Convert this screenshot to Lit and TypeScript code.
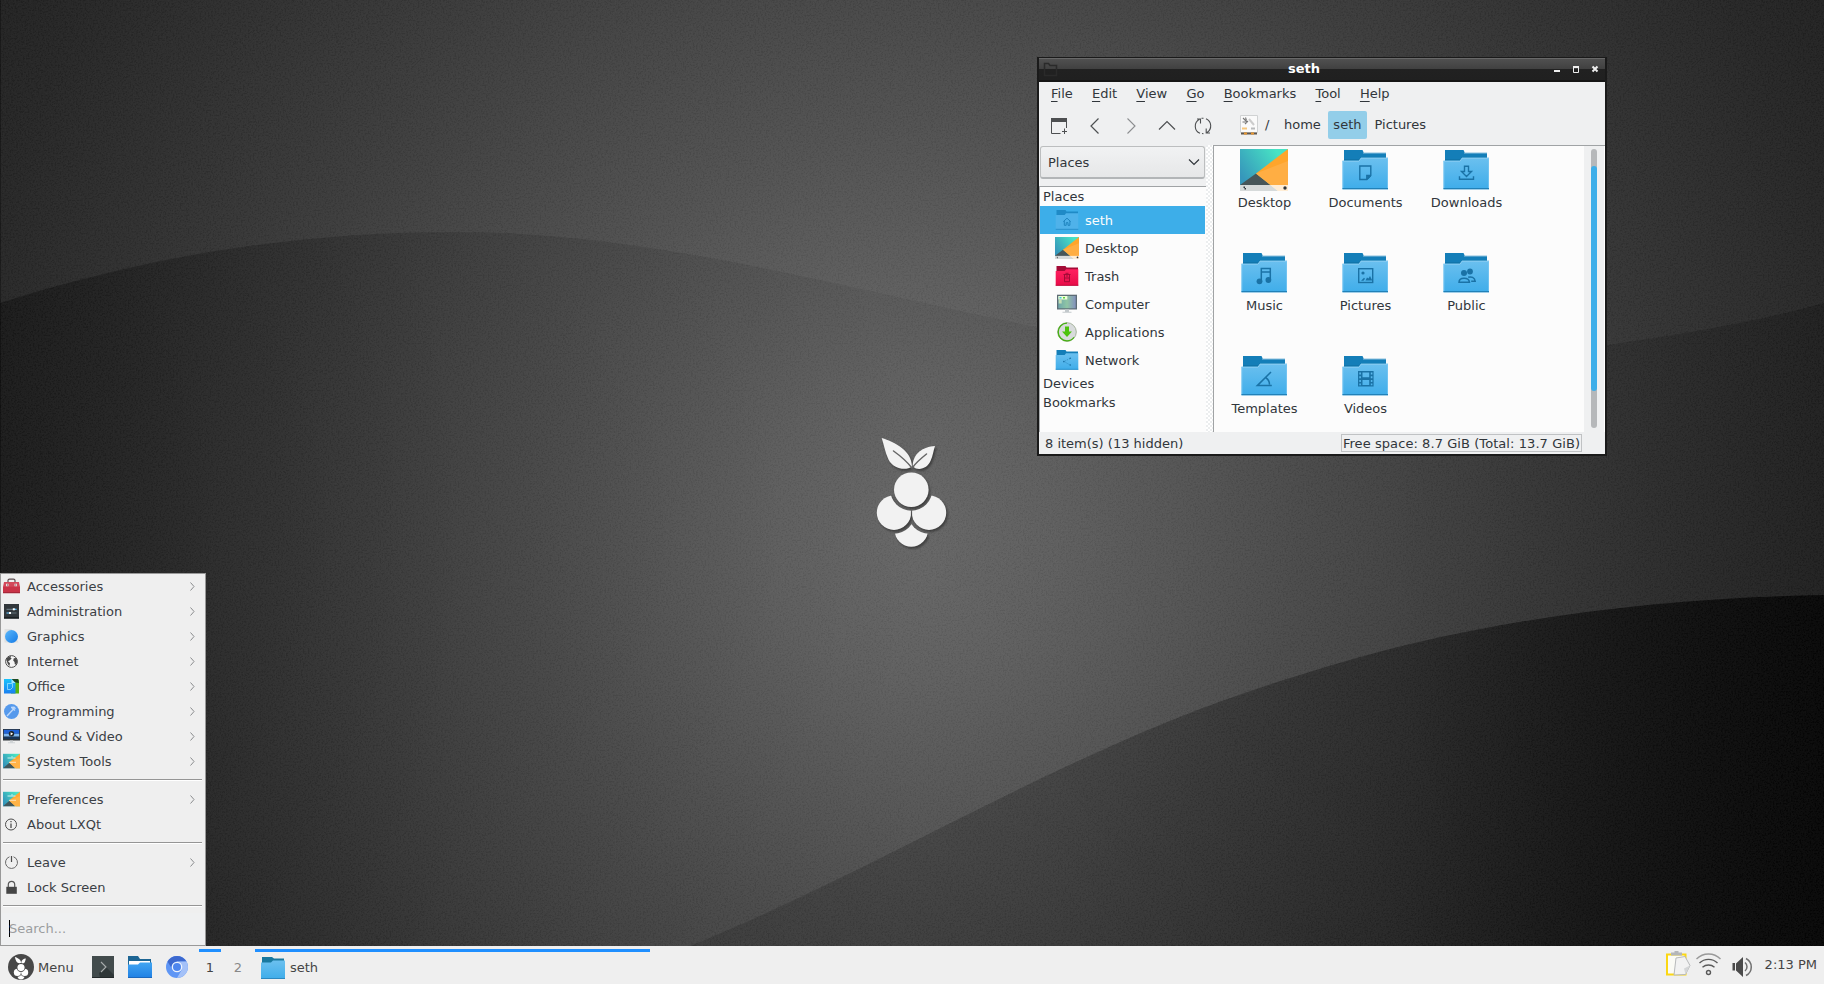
import { LitElement, html, svg, css, nothing } from "lit";
import { customElement } from "lit/decorators.js";
import { classMap } from "lit/directives/class-map.js";

const INK = "#1a72a6";

/* Emblems drawn on the front of the 48px folders */
const emblems: Record<string, unknown> = {
  none: nothing,
  documents: svg`<path d="M18.800 19h11v9.500l-4 4h-7z M29.800 28.500h-4v4" fill="none" stroke=${INK} stroke-width="1.400"/><path d="M30 28.500v.8l-3.800 3.700v-4.500z" fill=${INK}/>`,
  downloads: svg`<path d="M22.500 19.200h4v5.300h3l-5 5-5-5h3z M17.500 29.300v3h14v-3" fill="none" stroke=${INK} stroke-width="1.400"/>`,
  music: svg`<path d="M21.300 31.500v-13h9v11.500 M21.300 22h9" fill="none" stroke=${INK} stroke-width="1.500"/><circle cx="19.500" cy="31.300" r="2.900" fill=${INK}/><circle cx="28.400" cy="30" r="2.900" fill=${INK}/>`,
  pictures: svg`<rect x="17.700" y="18.700" width="14" height="13.800" fill="none" stroke=${INK} stroke-width="1.400"/><circle cx="22" cy="23" r="1.600" fill=${INK}/><path d="M24.500 30.500l1.500-3 1.500 1 1.500-2.500 2.300 4.500z M20 30.800l3-3 1 1-1.500 2z" fill=${INK}/>`,
  public: svg`<circle cx="22" cy="23" r="3" fill=${INK}/><circle cx="28" cy="21.500" r="2.900" fill=${INK}/><path d="M17 32.300c0-5.500 10-5.500 10.500 0z M26.200 27.300c3-1 6.500 0 7 4h-4" fill="none" stroke=${INK} stroke-width="1.500"/>`,
  templates: svg`<path d="M31 19L17.300 32.600h14.500 M26 25c2.500 1.500 3.500 4 3.500 6.500" fill="none" stroke=${INK} stroke-width="1.500"/>`,
  videos: svg`<path d="M17 18h15.600v15.500h-15.600z M18.300 19.500v2h1.600v-2z m0 3.800v2h1.600v-2z m0 3.800v2h1.600v-2z m0 3.500v1.600h1.600v-1.600z M29.800 19.500v2h1.600v-2z m0 3.800v2h1.600v-2z m0 3.800v2h1.600v-2z m0 3.500v1.600h1.600v-1.600z M21.500 19.500v4.700h6.700v-4.700z M21.500 27v5h6.700v-5z" fill=${INK} fill-rule="evenodd"/>`,
};

const folderBig = (emblem: string) => svg`
  <svg class="block" width="48" height="48" viewBox="0 0 48 48">
    <path d="M3 3h18.500l1.500 3h22v10H3z" fill="#147eb8"/>
    <path d="M3 12.500h15l2-2h25v3H3z" fill="#0c5f8d" opacity=".55"/>
    <path d="M22 6h23" stroke="#8bc0de" stroke-width="1"/>
    <path d="M1.500 13.700H18l2-3h27v31.500H1.500z" fill="url(#gFolder)"/>
    <path d="M1.500 14.200H18l2-3h27" fill="none" stroke="#8bcdf2" stroke-width="1"/>
    <path d="M2 14v28M46.500 11v31" stroke="#7cc8f3" stroke-width="1" opacity=".7"/>
    <path d="M1.500 41.600h45.500" stroke="#2181b8" stroke-width="1.200"/>
    ${emblems[emblem]}
  </svg>`;

const folderSmall = (kind: string) => {
  const red = kind === "trash";
  const back = red ? "#a30b36" : kind === "home" ? "#1f8ac6" : "#147eb8";
  const front = red ? "url(#gRed)" : kind === "home" ? "#4fb2ea" : "url(#gFolder)";
  return svg`
  <svg class="block" width="24" height="24" viewBox="0 0 24 24">
    <path d="M1.500 2h9l1 1.500h11.500v5H1.500z" fill=${back}/>
    <path d="M.7 7h9l1.300-1.700h12.300v16.200H.7z" fill=${front}/>
    <path d="M.7 21.300h22.600" stroke=${red ? "#c00a3c" : "#2990cc"} stroke-width="1"/>
    ${kind === "home" ? svg`<path d="M8.300 13.600l3.700-3.400 3.700 3.400M9.300 13v4.300h1.900v-2.600h1.800v2.600h1.900V13" fill="none" stroke="#1f84bf" stroke-width="1"/>` : nothing}
    ${red ? svg`<path d="M8.500 10.500h7M9.500 10.500v7.200h5v-7.200M10.500 9.300h3M9.500 14h5M11 12h2" fill="none" stroke="#a30b36" stroke-width="1"/>` : nothing}
    ${kind === "network" ? svg`<path d="M15 10.500l-6 3 6 3.500" fill="none" stroke=${INK} stroke-width=".6" stroke-dasharray="1.200 1.200"/><circle cx="15.300" cy="10.300" r=".8" fill=${INK}/><circle cx="15.300" cy="17" r=".8" fill=${INK}/><circle cx="8.800" cy="13.600" r=".8" fill=${INK}/>` : nothing}
  </svg>`;
};

const desktopIcon = (w: number, h: number) => svg`
  <svg class="block" width=${w} height=${h} viewBox="0 0 48 42" preserveAspectRatio="none">
    <rect width="48" height="42" fill="url(#gTeal)"/>
    <path d="M0 36l16-11.500L38 42H0z" fill="#475659"/>
    <path d="M16 24.500L48 0v42H38z" fill="#ffa52b"/>
    <path d="M16 24.500L48 12v30H38z" fill="#ffb04a" opacity=".8"/>
    <path d="M0 36h48v6H0z" fill="#fff" opacity=".78"/>
    <path d="M3.500 37.500h1.500v1.500h1v1.500h-1.500v-1.500h-1z" fill="#31363b"/><circle cx="45" cy="39" r="1.700" fill="#31363b"/>
  </svg>`;

const sidebarIcon = (kind: string) => {
  if (kind === "desktop") return desktopIcon(24, 22);
  if (kind === "computer")
    return svg`<svg class="block" width="24" height="24" viewBox="0 0 24 24">
      <rect x="2" y="2.700" width="20" height="14.800" fill="#5d6c75"/><rect x="3.300" y="4" width="17.400" height="12.300" fill="url(#gScreen)"/>
      <path d="M3.300 4h9v3.500h-9z" fill="#efffd9"/><path d="M4.500 5h2v1.500h-2z" fill="#3cc6de"/><path d="M8 5h2v1.500H8z" fill="#5bd13f"/><path d="M3.700 7.500h3v4h-3z" fill="#c6dfb4"/>
      <path d="M10 17.500h4v2.300h2.500v1h-9v-1H10z" fill="#c3c9cc"/></svg>`;
  if (kind === "apps")
    return svg`<svg class="block" width="24" height="24" viewBox="0 0 24 24">
      <circle cx="12" cy="12" r="9.300" fill="#d8dbdc" stroke="#a5b39c" stroke-width="1"/><path d="M12 3.200a8.800 8.800 0 0 0 0 17.600M12 20.800a9 9 0 0 0 7-3.500" fill="none" stroke="#47b012" stroke-width="1.300"/>
      <path d="M10 6.500h4v5h3l-5 5.500-5-5.500h3z" fill="#4cc30c"/></svg>`;
  return folderSmall(kind);
};

const globe = svg`<circle cx="8.500" cy="8.500" r="5.900" fill="#f5f5f5" stroke="#4a4a4a" stroke-width="1"/><path d="M3.200 6.500c.8-1.800 2.500-3.200 5-3.500L7.500 4.800l1.200.8L6.500 7.500l-1.500.8 2 1.900-.7 3L4.800 11z M10.800 5.300l2.500-.3 1.100 3.500-1.100 3.300-1.500-.5-.3-2.300-1.300-1.500z" fill="#4a4a4a"/>`;

const toolsIcon = svg`<rect y=".8" width="17" height="14.400" fill="url(#gTeal)"/><path d="M0 15.200l7-6 5 6z" fill="#41575c"/><path d="M6 9.500L17 .8v14.400h-4.500z" fill="#ffa834"/><path d="M6 9.500L17 5v10.200h-4.500z" fill="#ffb347"/><path d="M4.500 5h8M6 9.300h7M9 3v2.500" stroke="#fff" stroke-width="1.300" opacity=".5"/>`;

const menuIcons: Record<string, unknown> = {
  accessories: svg`<path d="M5 4.500V2.600Q5 1.200 6.500 1.200h4Q12 1.200 12 2.600v2" fill="none" stroke="#5a4a4c" stroke-width="1.200"/><path d="M1 4h15l1 5H0z" fill="#d3485a"/><path d="M0 8.700h17V15.200H0z" fill="#c93347"/><path d="M0 14.600h17" stroke="#a2283a"/><path d="M3 5.700h2.500v2.500H3zM11.500 5.700H14v2.500h-2.500z" fill="#e8dcdc"/><path d="M4 6.500h1v1h-1zM12.200 6.500h1v1h-1z" fill="#6e4a50"/>`,
  administration: svg`<path d="M1 1h15v14.700H1z" fill="#31373b"/><path d="M1 14.700h15" stroke="#1c2022" stroke-width="1.500"/><path d="M3.500 6.300h10M3.500 10h10" stroke="#65747c" stroke-width="1.200"/><path d="M3.500 10h4M10 6.300h3.500" stroke="#4fb4ef" stroke-width="1.200"/><rect x="9.800" y="5.300" width="2" height="2" fill="#fff"/><rect x="6" y="9" width="2" height="2" fill="#fff"/>`,
  graphics: svg`<path d="M1.500 1h7l7 13.500H1.500z" fill="#dfe0e0"/><circle cx="8.500" cy="8.500" r="6.500" fill="url(#gBall)"/>`,
  internet: globe,
  office: svg`<path d="M8 1.500h8v14H8z" fill="#58b40f"/><path d="M9 1h6l1 4-7-1z" fill="#1f4a24"/><path d="M1 1h7.500l4 4v10.500H1z" fill="url(#gOffice)"/><path d="M8.500 1v4h4z" fill="#a0e6ff"/><path d="M4.500 5.500h5v4l-2 2h-3z" fill="none" stroke="#a8e9ff" stroke-width="1" opacity=".7"/>`,
  programming: svg`<circle cx="8.500" cy="8.500" r="7.500" fill="#5599ec"/><path d="M4 13l7-7.500M8.500 4.200l3.500 3.300M8 4.500l3-.3 1.500 1.500" stroke="#bdd8fa" stroke-width="1.400" fill="none"/>`,
  sound: svg`<path d="M0 1h17v11.500H0z" fill="#2c3338"/><path d="M.8 1.800h15.400v4H.8z" fill="#1e62d8"/><path d="M.8 5.800h15.400v3H.8z" fill="#7db6ee"/><path d="M.8 8.600h15.400v2.400H.8z" fill="#173457"/><circle cx="8.500" cy="5.800" r="2.700" fill="#1d2327"/><path d="M7.600 4.200v3.200l2.600-1.600z" fill="#fff"/><path d="M7 12.500h3v1.700h2v1H5v-1h2z" fill="#d0d4d6"/>`,
  tools: toolsIcon,
  about: svg`<circle cx="8" cy="8.500" r="5.500" fill="none" stroke="#4d4d4d" stroke-width="1"/><path d="M8 7.500v4.500M8 5v1.300" stroke="#4d4d4d" stroke-width="1.300"/>`,
  leave: svg`<path d="M6.500 2.800a6 6 0 1 0 4 0" fill="none" stroke="#6a6a6a" stroke-width="1"/><path d="M8.500 2v6" stroke="#4d4d4d" stroke-width="1.200"/>`,
  lock: svg`<path d="M3.300 7.800h10.500v7H3.300z" fill="#454545"/><path d="M5.300 8V5.500a3.200 3.200 0 0 1 6.400 0V8" fill="none" stroke="#555" stroke-width="1.200"/>`,
};

interface MenuEntry { label: string; icon: string; sub: boolean }
const menuGroups: MenuEntry[][] = [
  [
    { label: "Accessories", icon: "accessories", sub: true },
    { label: "Administration", icon: "administration", sub: true },
    { label: "Graphics", icon: "graphics", sub: true },
    { label: "Internet", icon: "internet", sub: true },
    { label: "Office", icon: "office", sub: true },
    { label: "Programming", icon: "programming", sub: true },
    { label: "Sound & Video", icon: "sound", sub: true },
    { label: "System Tools", icon: "tools", sub: true },
  ],
  [
    { label: "Preferences", icon: "tools", sub: true },
    { label: "About LXQt", icon: "about", sub: false },
  ],
  [
    { label: "Leave", icon: "leave", sub: true },
    { label: "Lock Screen", icon: "lock", sub: false },
  ],
];

const places = [
  { label: "seth", icon: "home" },
  { label: "Desktop", icon: "desktop" },
  { label: "Trash", icon: "trash" },
  { label: "Computer", icon: "computer" },
  { label: "Applications", icon: "apps" },
  { label: "Network", icon: "network" },
];

const files = ["Desktop", "Documents", "Downloads", "Music", "Pictures", "Public", "Templates", "Videos"];

/* Berry mark: two leaves, three upper berries and a lower one, on a 72x112 canvas */
const berry = svg`
  <path d="M2.700 2C16 6 33 15 33 30.500 27 35 14 33 9.500 23.500 6 16 5 9 2.700 2z"/>
  <path d="M56 10C44 11 34 17 33.700 30.500 40 36 49 31.500 51.500 25 54 19.500 54.500 14 56 10z"/>
  <circle cx="32.300" cy="53.700" r="17.300"/>
  <g mask="url(#mTop)"><circle cx="15" cy="76.700" r="17.200"/><circle cx="50" cy="76.700" r="17.200"/></g>
  <g mask="url(#mBottom)"><circle cx="32.300" cy="94" r="16.700"/></g>`;
const veins = svg`<path d="M14.500 15c7 5 13 10 18.500 17M47.500 18c-5 4-10 8-13.500 13" fill="none" stroke-width="1.500" stroke-linecap="round"/>`;

@customElement("app-root")
export class AppRoot extends LitElement {
  static styles = css`
    :host { display: block; width: 1824px; height: 984px; overflow: hidden; font: 13px/19px "DejaVu Sans", sans-serif; color: #31363b; }
    .desktop { position: relative; display: flex; flex-direction: column; width: 1824px; height: 984px; background: #333; }
    .block { display: block; flex: none; }
    .space { flex: 1; min-height: 0; overflow: hidden; }
    .defs { position: absolute; width: 0; height: 0; }
    .window { position: absolute; left: 1037px; top: 57px; width: 570px; height: 399px; box-sizing: border-box; display: flex; flex-direction: column; background: #1a1a1a; padding: 1px 2px 2px; }
    .titlebar { height: 24px; flex: none; box-sizing: border-box; border-top: 1px solid #686868; border-bottom: 2px solid #151515; background: linear-gradient(#505050, #404040 10px, #212121 10px, #202020); display: grid; grid-template-columns: 58px 1fr 58px; color: #fff; font-weight: bold; }
    .title { text-align: center; line-height: 19px; padding-right: 36px; }
    .titleicon { padding: 2px 0 0 4px; }
    .controls { margin: 3px 0 0 2px; }
    .body { flex: 1; min-height: 0; background: #eff0f1; display: flex; flex-direction: column; }
    .menubar { display: flex; height: 25px; padding-left: 12px; gap: 19.200px; line-height: 24px; }
    .menubar u { text-decoration-thickness: 1px; text-underline-offset: 3px; }
    .toolbar { display: flex; align-items: center; height: 38px; box-sizing: border-box; padding: 0 0 1px 9px; }
    .tool { width: 36px; }
    .crumbs { display: flex; align-items: center; padding-left: 12px; height: 28px; line-height: 28px; margin-top: -1px; }
    .slash { width: 16px; padding-left: 7px; }
    .crumb { padding: 0 5.500px; height: 28px; border-radius: 2px; }
    .crumb.home { padding-left: 3px; padding-right: 7px; }
    .crumb.on { background: #93cee9; }
    .crumb.last { padding-left: 7.500px; }
    .panes { flex: 1; min-height: 0; display: grid; grid-template-columns: 167px 7px 1fr; grid-template-rows: minmax(0, 1fr); }
    .side { display: flex; flex-direction: column; min-height: 0; }
    .combo { margin: 1px 1px 7px 1px; height: 33px; flex: none; box-sizing: border-box; border: 1px solid #bcbebf; border-bottom: 2px solid #b2b5b7; border-radius: 3px; background: linear-gradient(#f1f2f3, #e6e7e8); display: flex; justify-content: space-between; align-items: center; padding: 0 4px 0 7px; }
    .tree { flex: 1; min-height: 0; box-sizing: border-box; background: #fcfcfc; border-top: 1px solid #a0a3a5; border-left: 1px solid #a8abad; }
    .head { height: 19px; padding-left: 3px; line-height: 20px; }
    .place { height: 28px; margin-right: 1px; display: flex; align-items: center; gap: 6px; padding-left: 15px; }
    .place.on { background: #3daee9; color: #fcfcfc; }
    .picslot { width: 24px; height: 24px; display: flex; align-items: center; }
    .place span { line-height: 28px; padding-top: 1px; }
    .split { background: conic-gradient(#fff 25%, #eceeef 0 50%, #fff 0 75%, #eceeef 0) 0 0 / 4px 4px; }
    .view { border-top: 1px solid #a0a3a5; border-left: 1px solid #a0a3a5; display: flex; background: #fcfcfc; min-height: 0; }
    .grid { flex: 1; display: grid; grid-template-columns: repeat(3, 101px); grid-auto-rows: 103px; align-content: start; overflow: hidden; }
    .file { display: flex; flex-direction: column; align-items: center; line-height: 19px; }
    .thumb { height: 46px; padding: 1px 2px 0 0; display: flex; align-items: flex-start; }
    .thumb.pad { padding-top: 3px; height: 44px; }
    .bar { width: 21px; box-sizing: border-box; background: #eff0f1; padding: 3px 7px 5px; border-right: 1px solid #fff; }
    .groove { height: 279px; border-radius: 3px; background: #b6b8ba; padding-top: 17px; box-sizing: border-box; width: 6px; }
    .handle { height: 225px; border-radius: 3px; background: #3daee9; }
    .status { height: 22px; flex: none; display: flex; justify-content: space-between; padding: 0 23px 0 6px; line-height: 23px; }
    .free { height: 18px; margin-top: 2px; box-sizing: border-box; border: 1px solid #c0c2c4; line-height: 18px; width: 241px; text-align: center; white-space: nowrap; letter-spacing: .07px; }
    .startmenu { position: absolute; left: 0; top: 573px; width: 206px; height: 373px; box-sizing: border-box; border: 1px solid #999; background: #efefef; color: #3b4045; display: flex; flex-direction: column; }
    .entry { height: 25px; display: flex; align-items: center; padding: 0 8px 0 2px; }
    .entry .label { flex: 1; padding-left: 7px; line-height: 25px; }
    .rule { height: 1px; margin: 5px 3px 6px 2px; background: #959595; border-bottom: 1px solid #fff; flex: none; }
    .search { flex: 1; background: #eff0f1; color: #9b9d9f; display: flex; align-items: center; padding: 0 0 2px 8px; }
    .caret { width: 1px; height: 17px; background: #000; margin-right: -1px; }
    .taskbar { height: 38px; flex: none; background: #efefef; display: flex; color: #444; z-index: 1; }
    .launch { display: flex; align-items: center; width: 191px; padding-left: 8px; padding-top: 4px; height: 34px; line-height: 27px; }
    .launch .word { width: 54px; padding-left: 4px; }
    .launch .term { margin-right: 14px; }
    .launch .fold { margin-right: 14px; }
    .desk { width: 22px; margin-right: 6px; text-align: center; padding-top: 3px; height: 35px; box-sizing: content-box; }
    .desk::before, .task::before { content: ""; display: block; height: 3px; }
    .desk.on::before, .task::before { background: #1f8fff; }
    .desk span { line-height: 32px; }
    .desk.off { color: #888; }
    .task { width: 395px; padding-top: 3px; }
    .taskrow { display: flex; align-items: center; gap: 5px; padding-left: 6px; height: 31px; line-height: 33px; }
    .tray { margin-left: auto; display: flex; padding-right: 7px; }
    .clock { padding-left: 10px; line-height: 37px; white-space: nowrap; }
  `;

  private wallpaper() {
    return svg`
    <svg class="block" width="1824" height="946" viewBox="0 0 1824 946">
      <rect width="1824" height="984" fill="url(#gWall)"/>
      <path d="M0 303C150 255 300 232 455 232C650 232 830 285 1037 327C1180 356 1400 363 1607 345C1690 333 1760 321 1824 303V984H0z" fill="url(#gWave)"/>
      <path d="M690 946C900 860 1080 740 1300 675C1470 620 1650 598 1824 595V984H640z" fill="url(#gWave2)"/>
      <rect width="1824" height="984" filter="url(#fGrain)" opacity=".04"/>
      <path d="M.5 0V946" stroke="#000" opacity=".3"/>
      <g transform="translate(879 436)">
        <g fill="#000" opacity=".38" filter="url(#fSoft)" transform="translate(1.500 2)">${berry}</g>
        <g fill="#f2f2f2">${berry}</g><g stroke="#666">${veins}</g>
      </g>
    </svg>`;
  }

  private defs() {
    return svg`<svg class="defs"><defs>
      <radialGradient id="gWall" gradientUnits="userSpaceOnUse" cx="0" cy="0" r="1" gradientTransform="translate(910 530) scale(1248 1326)">
        <stop offset="0" stop-color="#6d6d6d"/><stop offset=".115" stop-color="#656565"/><stop offset=".21" stop-color="#5b5b5b"/><stop offset=".31" stop-color="#505050"/><stop offset=".4" stop-color="#474747"/><stop offset=".52" stop-color="#3b3b3b"/><stop offset=".64" stop-color="#303030"/><stop offset=".77" stop-color="#252525"/><stop offset="1" stop-color="#161616"/>
      </radialGradient>
      <linearGradient id="gWave"><stop offset="0" stop-color="#000" stop-opacity=".36"/><stop offset=".12" stop-color="#000" stop-opacity=".24"/><stop offset=".25" stop-color="#000" stop-opacity=".14"/><stop offset=".5" stop-color="#000" stop-opacity=".06"/><stop offset=".75" stop-color="#000" stop-opacity=".08"/><stop offset="1" stop-color="#000" stop-opacity=".22"/></linearGradient>
      <linearGradient id="gWave2" x1="0" y1="0" x2="1" y2="0"><stop offset="0" stop-color="#000" stop-opacity=".14"/><stop offset=".35" stop-color="#000" stop-opacity=".22"/><stop offset=".65" stop-color="#000" stop-opacity=".36"/><stop offset="1" stop-color="#000" stop-opacity=".8"/></linearGradient>
      <linearGradient id="gFolder" x1="0" y1="0" x2="0" y2="1"><stop offset="0" stop-color="#6bc0ef"/><stop offset="1" stop-color="#3fadea"/></linearGradient>
      <linearGradient id="gRed" x1="0" y1="0" x2="0" y2="1"><stop offset="0" stop-color="#ff2060"/><stop offset="1" stop-color="#e80c48"/></linearGradient>
      <linearGradient id="gTeal" x1="0" y1=".6" x2="1" y2="0"><stop offset="0" stop-color="#3697bb"/><stop offset=".8" stop-color="#48e3c4"/></linearGradient>
      <linearGradient id="gScreen"><stop offset="0" stop-color="#6fa7ac"/><stop offset=".5" stop-color="#8fc5a4"/><stop offset="1" stop-color="#8492bd"/></linearGradient>
      <linearGradient id="gBall" x1="0" y1="0" x2="1" y2="1"><stop offset="0" stop-color="#5cb8fb"/><stop offset="1" stop-color="#137ae6"/></linearGradient>
      <linearGradient id="gOffice" x1="0" y1="0" x2="0" y2="1"><stop offset="0" stop-color="#19c3fb"/><stop offset="1" stop-color="#1a7ff0"/></linearGradient>
      <linearGradient id="gBlue" x1="0" y1="0" x2="0" y2="1"><stop offset="0" stop-color="#41a5f2"/><stop offset="1" stop-color="#1f80e4"/></linearGradient>
      <mask id="mTop" maskUnits="userSpaceOnUse" x="-10" y="-10" width="100" height="140"><rect x="-10" y="-10" width="100" height="140" fill="#fff"/><circle cx="32.300" cy="53.700" r="21"/><path d="M32.500 70v40" stroke="#000" stroke-width="1.200"/></mask>
      <mask id="mBottom" maskUnits="userSpaceOnUse" x="-10" y="-10" width="100" height="140"><rect x="-10" y="-10" width="100" height="140" fill="#fff"/><circle cx="15" cy="76.700" r="21"/><circle cx="50" cy="76.700" r="21"/></mask>
      <filter id="fSoft" x="-20%" y="-20%" width="140%" height="140%"><feGaussianBlur stdDeviation="1.300"/></filter>
      <filter id="fGrain" x="0" y="0" width="100%" height="100%"><feTurbulence type="fractalNoise" baseFrequency=".6" numOctaves="2" seed="4"/><feColorMatrix values="1.600 0 0 0 -.55  1.600 0 0 0 -.55  1.600 0 0 0 -.55  0 0 0 0 1"/></filter>
    </defs></svg>`;
  }

  private fileWindow() {
    const icon = (body: unknown, cls = "tool") => html`<div class=${cls}><svg class="block" width="26" height="26" viewBox="0 0 26 26" fill="none" stroke="#4d4f51">${body}</svg></div>`;
    return html`<div class="window">
      <div class="titlebar">
        <svg class="block titleicon" width="16" height="16" viewBox="0 0 16 16" fill="none" stroke="#2a2a2a"><path d="M1.500 14.500v-12h4l1.500 2h6.500v10z" stroke-width="1.500"/></svg>
        <div class="title">seth</div>
        <svg class="block controls" width="56" height="16" viewBox="0 0 56 16" fill="none" stroke="#eee"><path d="M5 9h6" stroke-width="2"/><path d="M24.500 5.500v5h5v-5z" stroke-width="1"/><path d="M24 5h6" stroke-width="2"/><path d="M43.500 4.500l5 5m0-5l-5 5" stroke-width="2"/></svg>
      </div>
      <div class="body">
        <div class="menubar">${["File", "Edit", "View", "Go", "Bookmarks", "Tool", "Help"].map((m) => html`<span><u>${m[0]}</u>${m.slice(1)}</span>`)}</div>
        <div class="toolbar">
          ${icon(svg`<path d="M3.500 5v15.500h9M18.500 5v10"/><path d="M3 7h16" stroke-width="4"/><path d="M16.500 15.500v5.500M14 18.500h5"/>`)}
          ${icon(svg`<path d="M14.500 5.500L7 13l7.500 7.500" stroke-width="1.200"/>`)}
          ${icon(svg`<path d="M7.500 5.500L15 13l-7.500 7.500" stroke-width="1.100" stroke="#8b8d8f"/>`)}
          ${icon(svg`<path d="M3 16.500L11 8.500l8 8" stroke-width="1.200"/>`)}
          ${icon(svg`<path d="M8 20.300A7.800 7.800 0 0 1 7.500 6.200M11.500 20.700l-1.500-.2M14 5.700A7.800 7.800 0 0 1 15 19.500M11.500 5.300h-2M5 6h3.500v4.500M18 20h-3.800v-4.500" stroke-width="1.100"/>`)}
          <div class="crumbs">
            <svg class="block" width="18" height="20" viewBox="0 0 18 20"><path d="M.5.500h17v17H.5z" fill="#fafafa" stroke="#d0d2d3"/><path d="M3 3l4 4M5.500 2.500l1 3M8 6L5 9M2.500 7h3" stroke="#777" stroke-width="1.100"/><path d="M9 4l5 6" stroke="#ccc" stroke-width="2"/><path d="M2 13.500h5" stroke="#f7c77d" stroke-width="2"/><path d="M11 13.500h4" stroke="#b9bbbc" stroke-width="2"/><path d="M1 18.500h16" stroke="#5d564e" stroke-width="2"/><path d="M4 18.500h3m4 0h3" stroke="#e7962e" stroke-width="2"/></svg>
            <span class="slash">/</span><span class="crumb home">home</span><span class="crumb on">seth</span><span class="crumb last">Pictures</span>
          </div>
        </div>
        <div class="panes">
          <div class="side">
            <div class="combo"><span>Places</span><svg class="block" width="12" height="8" viewBox="0 0 12 8"><path d="M1 1.500l5 5 5-5" fill="none" stroke="#31363b" stroke-width="1.200"/></svg></div>
            <div class="tree">
              <div class="head">Places</div>
              ${places.map((p, i) => html`<div class=${classMap({ place: true, on: i === 0 })}><div class="picslot">${sidebarIcon(p.icon)}</div><span>${p.label}</span></div>`)}
              <div class="head">Devices</div>
              <div class="head">Bookmarks</div>
            </div>
          </div>
          <div class="split"></div>
          <div class="view">
            <div class="grid">${files.map((f, i) => html`<div class="file"><div class=${classMap({ thumb: true, pad: i === 0 })}>${i === 0 ? desktopIcon(48, 42) : folderBig(f.toLowerCase())}</div><span>${f}</span></div>`)}</div>
            <div class="bar"><div class="groove"><div class="handle"></div></div></div>
          </div>
        </div>
        <div class="status"><span>8 item(s) (13 hidden)</span><span class="free">Free space: 8.7 GiB (Total: 13.7 GiB)</span></div>
      </div>
    </div>`;
  }

  private startMenu() {
    return html`<div class="startmenu">
      ${menuGroups.map((g) => html`${g.map((e) => html`<div class="entry">
        <svg class="block" width="17" height="17" viewBox="0 0 17 17">${menuIcons[e.icon]}</svg>
        <span class="label">${e.label}</span>
        ${e.sub ? svg`<svg class="block" width="9" height="11" viewBox="0 0 9 11"><path d="M2.500 1.500L6 5.500 2.500 9.500" fill="none" stroke="#8a8c8e"/></svg>` : nothing}
      </div>`)}<div class="rule"></div>`)}
      <div class="search"><span class="caret"></span><span>Search...</span></div>
    </div>`;
  }

  private taskbar() {
    return html`<div class="taskbar">
      <div class="launch">
        <svg class="block" width="26" height="26" viewBox="0 0 26 26"><circle cx="13" cy="13" r="13" fill="#484848"/><g transform="translate(6.300 2.500) scale(.207)" fill="#fff">${berry}</g></svg>
        <span class="word">Menu</span>
        <svg class="block term" width="22" height="22" viewBox="0 0 22 22"><rect width="22" height="22" fill="#424b4c"/><path d="M14 11L22 19v3H8l-1-5z" fill="#2f3738"/><path d="M0 21.500h22" stroke="#23292a"/><path d="M9 6l5 5-5 5" fill="none" stroke="#a9adad" stroke-width="1.100"/></svg>
        <svg class="block fold" width="24" height="22" viewBox="0 0 24 22"><path d="M0 0h10l2 3h11v8H0z" fill="#1d6593"/><path d="M1 5h21v6H1z" fill="#fff"/><path d="M0 8.500h10l2-2h12V22H0z" fill="url(#gBlue)"/><path d="M0 21.500h24" stroke="#1b68bd"/></svg>
        <svg class="block" width="22" height="22" viewBox="0 0 22 22"><circle cx="11" cy="11" r="11" fill="#5f96f5"/><path d="M1.500 5.500A11 11 0 0 1 20.500 5.500H11A5.500 5.500 0 0 0 5.800 12.500z" fill="#3d69cf"/><path d="M11 5.500h9.500A11 11 0 0 1 11 22l4.800-8.200z" fill="#a4c1f8"/><circle cx="11" cy="11" r="5.300" fill="#eef3fd"/><circle cx="11" cy="11" r="4" fill="#4e86ee"/></svg>
      </div>
      <div class="desk on"><span>1</span></div>
      <div class="desk off"><span>2</span></div>
      <div class="task"><div class="taskrow">
        <svg class="block" width="24" height="22" viewBox="0 0 24 22"><path d="M1 0h10l2 1.500h10v8H1z" fill="#18789f"/><path d="M0 5.500h10l2-2h12V22H0z" fill="url(#gFolder)"/><path d="M0 21.500h24" stroke="#2c88c0"/></svg>
        <span>seth</span></div></div>
      <div class="tray">
        <svg class="block" width="90" height="38" viewBox="0 0 90 38">
          <rect x="2" y="8.500" width="18.500" height="20" fill="#fbfbf5" stroke="#fbd714" stroke-width="2"/><path d="M6 8.500V6.500h3.500V5h4v1.500H17v3H6z" fill="#b4b6b8"/>
          <path d="M11 12l9-1.500 5 9-4.500 9-11.500.5z" fill="#f2f2f2" stroke="#b8babb"/><path d="M25 19.500l-6 3 1.500 6z" fill="#d4d6d7"/>
          <g fill="none" stroke="#5a5a5a" stroke-width="1.400" transform="translate(0 -1)"><path d="M31.500 14a17 17 0 0 1 24 0" stroke="#999"/><path d="M34.500 18a13 13 0 0 1 18 0"/><path d="M37.500 22.300a9 9 0 0 1 12 0"/><circle cx="43.500" cy="27.500" r="2"/></g>
          <path d="M67.500 17h2.500v7.500h-2.500zM71 17.500l7-6.500v20l-7-6.500z" fill="#4a4a4a"/><path d="M80 16.500a5.500 5.500 0 0 1 0 8.500M81 12.500a9.500 9.500 0 0 1 0 17" fill="none" stroke="#707070" stroke-width="1.500"/>
        </svg>
        <span class="clock">2:13 PM</span>
      </div>
    </div>`;
  }

  render() {
    return html`<div class="desktop">
      ${this.defs()}
      <div class="space">${this.wallpaper()}</div>
      ${this.fileWindow()}
      ${this.startMenu()}
      ${this.taskbar()}
    </div>`;
  }
}
